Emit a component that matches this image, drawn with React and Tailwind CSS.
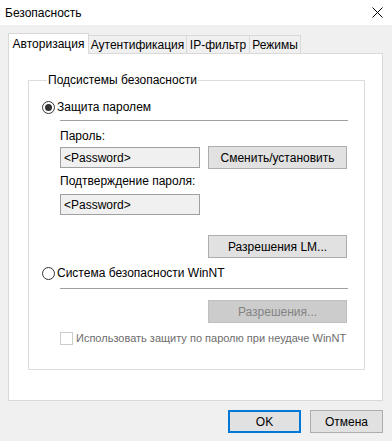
import React from "react";

function Radio({ checked }) {
  return (
    <span className="flex h-[13px] w-[13px] shrink-0 items-center justify-center rounded-full border border-[#333333] bg-white">
      {checked && <span className="h-[7px] w-[7px] rounded-full bg-[#333333]" />}
    </span>
  );
}

function Button({ children, className = "" }) {
  return (
    <div className={"flex h-[23px] items-center justify-center border border-[#adadad] bg-[#e1e1e1] text-black " + className}>
      {children}
    </div>
  );
}

function TextBox() {
  return (
    <div className="flex h-[21px] w-[140px] items-center border border-[#a0a0a0] bg-[#f0f0f0] pl-[3px] text-black">
      &lt;Password&gt;
    </div>
  );
}

export default function App() {
  return (
    <div
      className="flex h-[441px] w-[392px] flex-col whitespace-nowrap bg-[#f0f0f0] text-[12px] leading-[16px] text-black"
      style={{ fontFamily: '"Liberation Sans", Arial, sans-serif' }}
    >
      {/* Title bar */}
      <div className="flex h-[25px] items-center justify-between bg-white pl-[5px] pr-[8px]">
        <span>Безопасность</span>
        <svg width="11" height="11" viewBox="0 0 11 11" className="mr-[1px]">
          <path d="M0.5 0.5 L10.5 10.5 M10.5 0.5 L0.5 10.5" stroke="#000" strokeWidth="1" />
        </svg>
      </div>

      {/* Tabs */}
      <div className="ml-[8px] mt-[8px] flex h-[20px] items-end">
        <div className="relative z-10 -mb-px flex h-[21px] w-[81px] items-start justify-center border border-b-0 border-[#d9d9d9] bg-white pt-[2px]">
          Авторизация
        </div>
        <div className="flex h-[18px] w-[98px] items-center justify-center border border-l-0 border-b-0 border-[#d9d9d9] bg-[#f0f0f0]">
          Аутентификация
        </div>
        <div className="flex h-[18px] w-[63px] items-center justify-center border border-l-0 border-b-0 border-[#d9d9d9] bg-[#f0f0f0]">
          IP-фильтр
        </div>
        <div className="flex h-[18px] w-[51px] items-center justify-center border border-l-0 border-b-0 border-[#d9d9d9] bg-[#f0f0f0]">
          Режимы
        </div>
      </div>

      {/* Panel */}
      <div className="ml-[8px] h-[348px] w-[375px] border border-[#d9d9d9] bg-white pl-[19px] pt-[18px]">
        <fieldset className="w-[337px] border border-[#dcdcdc] px-[13px] pb-[23px]">
          <legend className="ml-[5px] px-[1px] leading-[16px]">Подсистемы безопасности</legend>
          <div className="mt-[11px] flex h-[16px] items-center gap-[2px]">
            <Radio checked />
            <span>Защита паролем</span>
          </div>
          <div className="ml-[18px] flex flex-col">
            <div className="mt-[5px] h-px w-[288px] bg-[#a0a0a0]" />
            <div className="mt-[7px] h-[16px]">Пароль:</div>
            <div className="mt-[2px] flex items-center gap-[8px]">
              <TextBox />
              <Button className="w-[139px]">Сменить/установить</Button>
            </div>
            <div className="mt-[4px] h-[16px]">Подтверждение пароля:</div>
            <div className="mt-[5px]">
              <TextBox />
            </div>
            <div className="mt-[20px] flex pl-[148px]">
              <Button className="w-[139px]">Разрешения LM...</Button>
            </div>
          </div>
          <div className="mt-[7px] flex h-[16px] items-center gap-[2px]">
            <Radio />
            <span>Система безопасности WinNT</span>
          </div>
          <div className="ml-[18px] flex flex-col">
            <div className="mt-[7px] h-px w-[288px] bg-[#a0a0a0]" />
            <div className="mt-[11px] flex pl-[148px]">
              <div className="flex h-[23px] w-[139px] items-center justify-center border border-[#bfbfbf] bg-[#cccccc] text-[#838383]">
                Разрешения...
              </div>
            </div>
            <div className="mt-[7px] flex h-[16px] items-center gap-[3px]">
              <span className="h-[13px] w-[13px] shrink-0 border border-[#cccccc] bg-white" />
              <span className="text-[11px] text-[#6d6d6d]">Использовать защиту по паролю при неудаче WinNT</span>
            </div>
          </div>
        </fieldset>
      </div>

      {/* Bottom buttons */}
      <div className="mr-[9px] mt-[9px] flex justify-end gap-[9px]">
        <div className="flex h-[23px] w-[73px] items-center justify-center border-2 border-[#0078d7] bg-[#e1e1e1]">
          OK
        </div>
        <Button className="w-[73px]">Отмена</Button>
      </div>
    </div>
  );
}
